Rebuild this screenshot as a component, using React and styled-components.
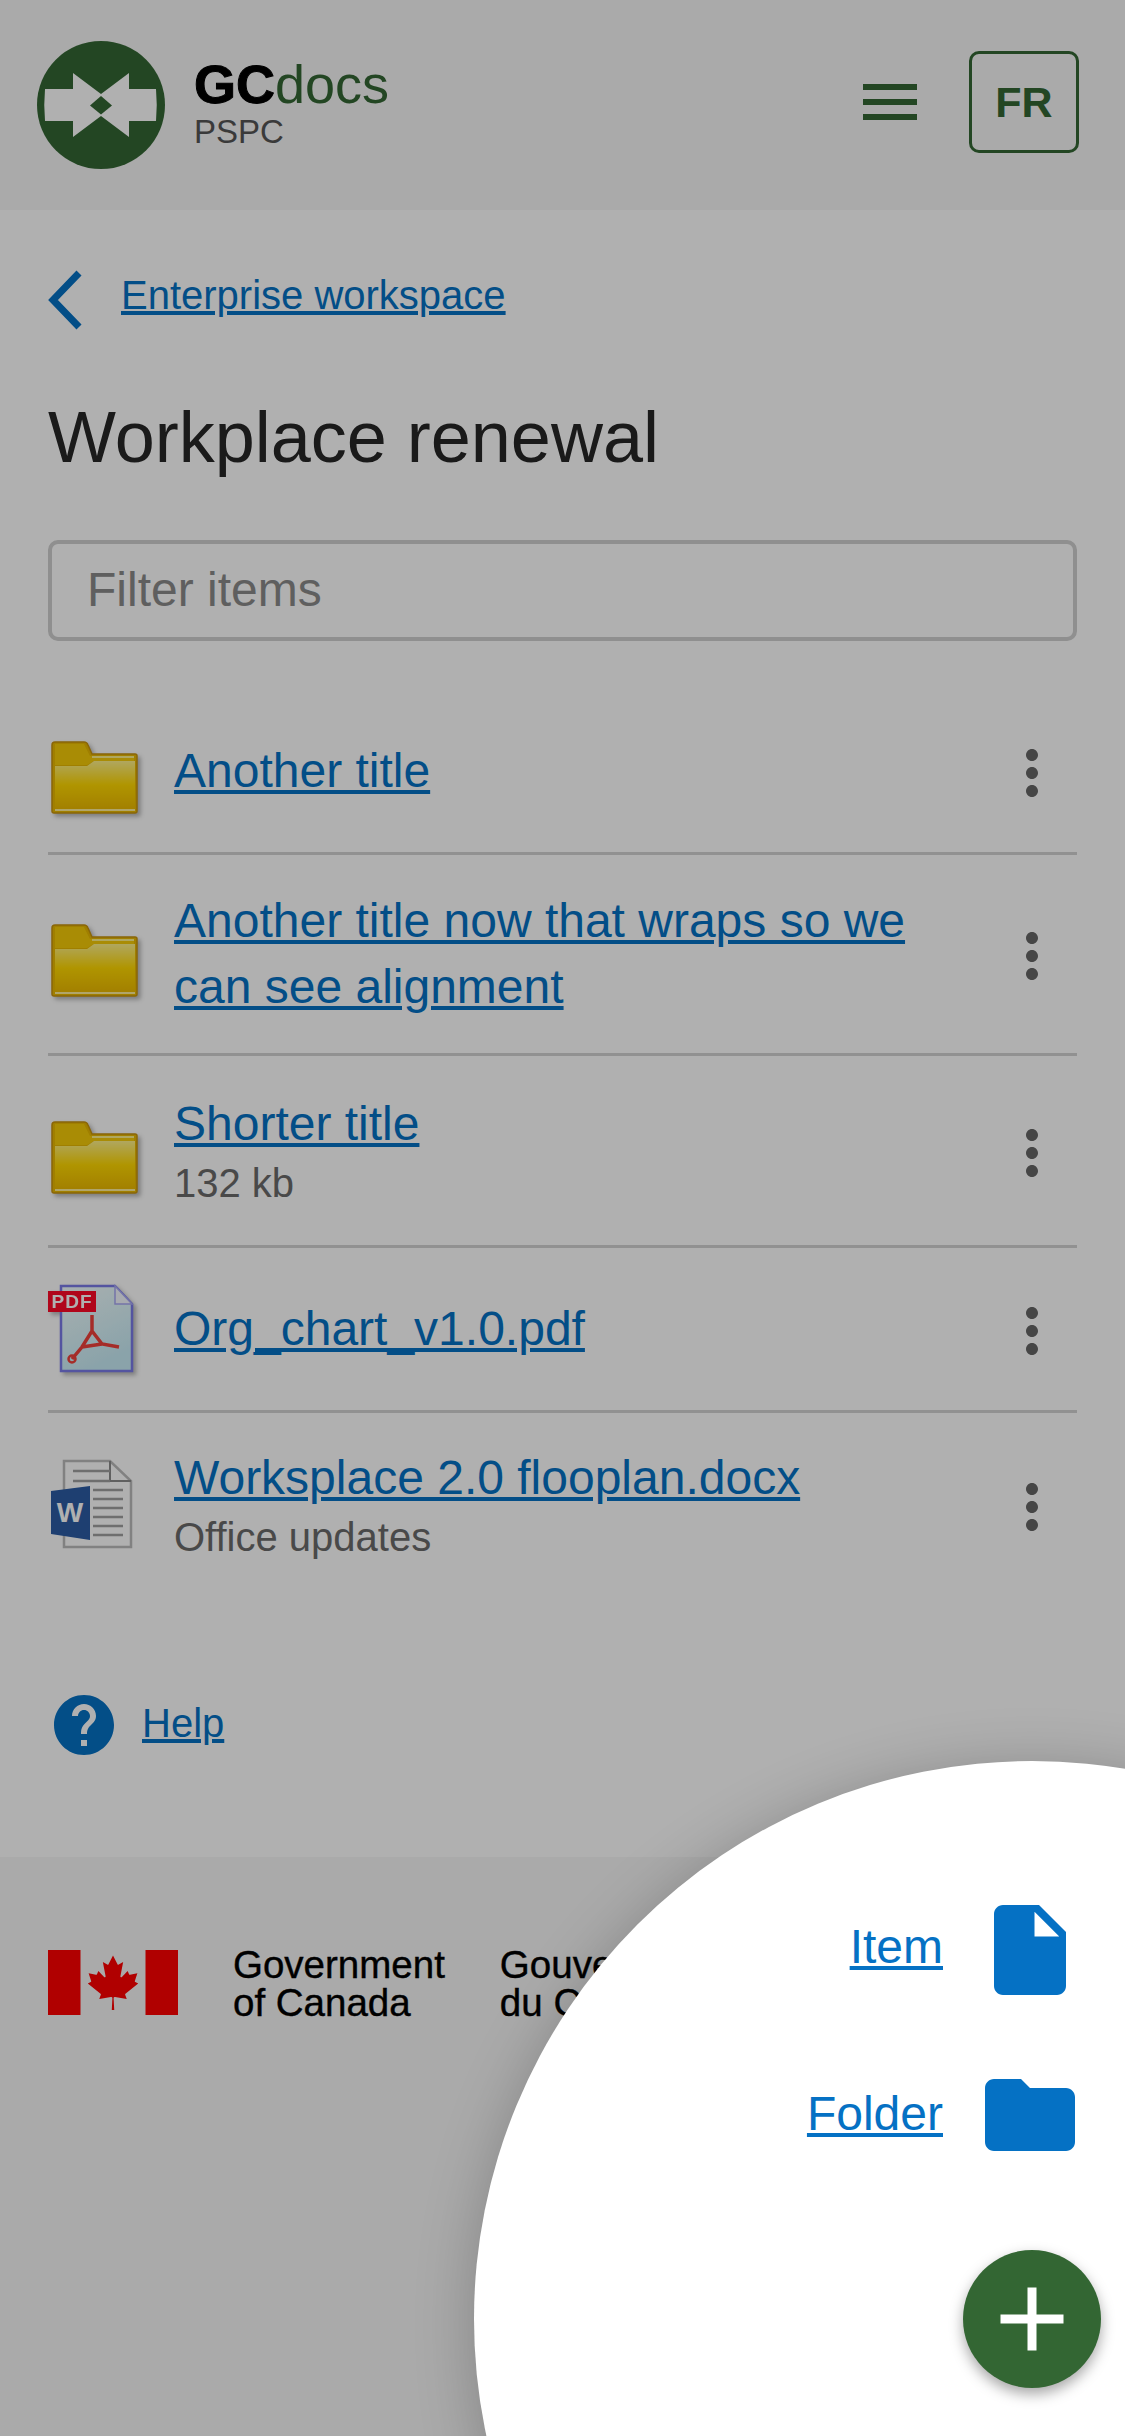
import React from "react";
import styled, { createGlobalStyle } from "styled-components";

const GlobalStyle = createGlobalStyle`
  html, body {
    margin: 0;
    padding: 0;
    background: #fff;
  }
  * {
    box-sizing: border-box;
  }
`;

const Page = styled.div`
  position: relative;
  width: 1125px;
  height: 2436px;
  overflow: hidden;
  font-family: "Liberation Sans", Arial, sans-serif;
  color: #262626;
  background: #fff;
`;

const Header = styled.header`
  display: flex;
  align-items: center;
  height: 210px;
  padding: 0 46px 6px 37px;
  background: #f6f6f6;
`;

const Logo = styled.svg`
  width: 128px;
  height: 128px;
  margin-top: 5px;
  flex: none;
`;

const Wordmark = styled.div`
  display: flex;
  flex-direction: column;
  margin: 3px auto 0 29px;
`;

const Brand = styled.div`
  font-size: 54px;
  line-height: 54px;
  color: #336633;
  b {
    color: #000;
    -webkit-text-stroke: 1px #000;
  }
`;

const Dept = styled.div`
  margin-top: 3px;
  font-size: 33px;
  line-height: 36px;
  color: #555;
`;

const MenuIcon = styled.svg`
  width: 72px;
  height: 72px;
  fill: #336633;
`;

const LangButton = styled.div`
  display: flex;
  align-items: center;
  justify-content: center;
  width: 110px;
  height: 102px;
  margin-left: 43px;
  border: 3px solid #336633;
  border-radius: 10px;
  font-size: 43px;
  font-weight: 700;
  color: #336633;
`;

const Main = styled.main`
  padding: 52px 48px 96px;
`;

const BackRow = styled.div`
  display: flex;
  align-items: center;
  gap: 38px;
  height: 66px;
`;

const Chevron = styled.svg`
  width: 35px;
  height: 60px;
  margin-top: 10px;
  fill: none;
  stroke: #0571c4;
  stroke-width: 7;
`;

const TextLink = styled.a`
  font-size: ${(p) => p.$size || 48}px;
  line-height: ${(p) => p.$lh || 66}px;
  color: #0571c4;
  text-decoration: underline;
`;

const Title = styled.h1`
  margin: 66px 0 60px;
  font-size: 72px;
  line-height: 86px;
  font-weight: 400;
  color: #262626;
`;

const FilterInput = styled.input`
  display: block;
  width: 100%;
  height: 101px;
  padding: 0 35px 2px;
  border: 4px solid #cfcfcf;
  border-radius: 10px;
  background: #fff;
  font-family: inherit;
  font-size: 48px;
  &::placeholder {
    color: #8a8a8a;
    opacity: 1;
  }
`;

const List = styled.ul`
  list-style: none;
  margin: 49px 0 0;
  padding: 0;
`;

const Row = styled.li`
  display: flex;
  align-items: center;
  padding: 33px 9px 33px 0;
  border-bottom: 3px solid #d2d2d2;
  &:last-child {
    padding-top: 30px;
    border-bottom: 0;
  }
`;

const FileIcon = styled.svg`
  width: 96px;
  height: 96px;
  flex: none;
  overflow: visible;
  filter: ${(p) => (p.$flat ? "none" : "drop-shadow(3px 3px 2px rgba(0, 0, 0, 0.28))")};
`;

const RowText = styled.div`
  flex: 1;
  margin: 0 36px 0 30px;
  padding-top: ${(p) => (p.$hasSub ? 2 : 0)}px;
`;

const SubText = styled.div`
  padding-bottom: 3px;
  font-size: 40px;
  line-height: 52px;
  color: #6b6b6b;
`;

const MoreIcon = styled.svg`
  width: 72px;
  height: 72px;
  margin-top: 4px;
  flex: none;
  fill: #666;
`;

const HelpRow = styled.div`
  display: flex;
  align-items: center;
  gap: 22px;
  margin-top: 90px;
`;

const HelpIcon = styled.svg`
  width: 72px;
  height: 72px;
  fill: #0571c4;
`;

const HelpLink = styled(TextLink)`
  margin-bottom: 4px;
`;

const Footer = styled.footer`
  display: flex;
  align-items: flex-start;
  height: 579px;
  padding: 93px 48px 0;
  background: #f6f6f6;
`;

const Flag = styled.svg`
  width: 130px;
  height: 65px;
  flex: none;
  fill: #ff0000;
`;

const Wordmarks = styled.div`
  display: flex;
  gap: 55px;
  margin: -4px 0 0 55px;
`;

const GovName = styled.div`
  font-size: 38.5px;
  line-height: 38px;
  color: #000;
  -webkit-text-stroke: 0.4px #000;
`;

const Scrim = styled.div`
  position: absolute;
  inset: 0;
  background: rgba(0, 0, 0, 0.31);
`;

const Spotlight = styled.div`
  position: absolute;
  left: 474px;
  top: 1761px;
  width: 1116px;
  height: 1116px;
  border-radius: 50%;
  background: #fff;
  box-shadow: 0 6px 60px rgba(0, 0, 0, 0.22);
`;

const Dial = styled.div`
  position: absolute;
  right: 24px;
  bottom: 48px;
  display: flex;
  flex-direction: column;
  align-items: flex-end;
`;

const DialAction = styled.div`
  display: flex;
  align-items: center;
  gap: 33px;
  margin-bottom: ${(p) => p.$gap}px;
  padding-right: 17px;
`;

const DialLabel = styled(TextLink)`
  margin-bottom: ${(p) => p.$lift}px;
`;

const DialIcon = styled.svg`
  width: 108px;
  height: 108px;
  fill: #0571c4;
`;

const Fab = styled.button`
  display: flex;
  align-items: center;
  justify-content: center;
  width: 138px;
  height: 138px;
  padding: 0;
  border: 0;
  border-radius: 50%;
  background: #336633;
  box-shadow: 0 6px 14px rgba(0, 0, 0, 0.35);
`;

const PlusIcon = styled.svg`
  width: 108px;
  height: 108px;
  fill: #fff;
`;

const FolderIcon = () => (
  <FileIcon viewBox="0 0 96 96">
    <defs>
      <linearGradient id="folderFront" x1="0" y1="0" x2="0" y2="1">
        <stop offset="0" stopColor="#fff28a" />
        <stop offset="0.5" stopColor="#ffd800" />
        <stop offset="1" stopColor="#ecba00" />
      </linearGradient>
    </defs>
    <path
      d="M7 19h29q3 0 4 3l4 9h43a2 2 0 0 1 2 2v55a2 2 0 0 1-2 2H6a2 2 0 0 1-2-2V22a3 3 0 0 1 3-3z"
      fill="#e8b800"
      stroke="#c8940c"
      strokeWidth="1.5"
    />
    <path d="M7 21h29l6 12h44v5H46l-7 4H7z" fill="#f5cb08" />
    <path d="M44 34h42" stroke="#fff28a" strokeWidth="2" />
    <path d="M7 43h32l7-5h41v48H7z" fill="url(#folderFront)" />
    <path d="M7 87h80" stroke="#fff09a" strokeWidth="2" />
  </FileIcon>
);

const PdfIcon = () => (
  <FileIcon viewBox="0 0 96 96">
    <defs>
      <linearGradient id="pdfPage" x1="0" y1="0" x2="0.4" y2="1">
        <stop offset="0" stopColor="#f4ffff" />
        <stop offset="1" stopColor="#c8ecf6" />
      </linearGradient>
    </defs>
    <path d="M13 5h54l17 18v67H13z" fill="url(#pdfPage)" stroke="#7a7ae8" strokeWidth="2.5" />
    <path d="M67 5v18h17z" fill="#f4f8ff" stroke="#a8a8f4" strokeWidth="1.5" />
    <path
      d="M44 34v16L34 66 24 78M44 50l10 13 17 3M34 66l20-3"
      fill="none"
      stroke="#f0403a"
      strokeWidth="3.5"
    />
    <circle cx="24" cy="78" r="3.5" fill="none" stroke="#f0403a" strokeWidth="2.5" />
    <rect x="0" y="10" width="48" height="21" fill="#ff0a28" />
    <text x="24" y="27" textAnchor="middle" fontSize="19" fontWeight="700" fill="#fff" letterSpacing="1">
      PDF
    </text>
  </FileIcon>
);

const WordIcon = () => (
  <FileIcon viewBox="0 0 96 96" $flat>
    <path d="M16 4h46l21 20v66H16z" fill="#fff" stroke="#bcbcbc" strokeWidth="2.5" />
    <path d="M62 4v20h21" fill="none" stroke="#8c8c8c" strokeWidth="2" />
    <path
      d="M25 14h37M25 24h37M45 33h30M45 42h30M45 51h30M45 60h30M45 69h30M45 78h30"
      stroke="#a0a0a0"
      strokeWidth="2.5"
    />
    <path d="M3 34l39-5v54L3 77z" fill="#2c5ca4" />
    <text x="22" y="65" textAnchor="middle" fontSize="28" fontWeight="700" fill="#fff">
      W
    </text>
  </FileIcon>
);

const items = [
  { title: "Another title", Icon: FolderIcon },
  { title: "Another title now that wraps so we can see alignment", Icon: FolderIcon },
  { title: "Shorter title", sub: "132 kb", Icon: FolderIcon },
  { title: "Org_chart_v1.0.pdf", Icon: PdfIcon },
  { title: "Worksplace 2.0 flooplan.docx", sub: "Office updates", Icon: WordIcon },
];

const App = () => (
  <Page>
    <GlobalStyle />
    <Header>
      <Logo viewBox="0 0 128 128">
        <circle cx="64" cy="64" r="64" fill="#336633" />
        <path
          d="M8 48h28V32l28 21 28-21v16h27q1.500 16 0 32H92v16L64 75 36 96V80H8q-1.500-16 0-32z"
          fill="#fff"
        />
        <path d="M64 55l11 9.500-11 9-11-9z" fill="#336633" />
      </Logo>
      <Wordmark>
        <Brand>
          <b>GC</b>docs
        </Brand>
        <Dept>PSPC</Dept>
      </Wordmark>
      <MenuIcon viewBox="0 0 24 24">
        <path d="M3 18h18v-2H3v2zm0-5h18v-2H3v2zm0-7v2h18V6H3z" />
      </MenuIcon>
      <LangButton>FR</LangButton>
    </Header>

    <Main>
      <BackRow>
        <Chevron viewBox="0 0 35 60">
          <path d="M31 3L5 30l26 27" />
        </Chevron>
        <TextLink href="#" $size={40} $lh={66}>
          Enterprise workspace
        </TextLink>
      </BackRow>
      <Title>Workplace renewal</Title>
      <FilterInput placeholder="Filter items" />
      <List>
        {items.map(({ title, sub, Icon }) => (
          <Row key={title}>
            <Icon />
            <RowText $hasSub={Boolean(sub)}>
              <TextLink href="#">{title}</TextLink>
              {sub && <SubText>{sub}</SubText>}
            </RowText>
            <MoreIcon viewBox="0 0 24 24">
              <path d="M12 8c1.100 0 2-.9 2-2s-.9-2-2-2-2 .9-2 2 .9 2 2 2zm0 2c-1.100 0-2 .9-2 2s.9 2 2 2 2-.9 2-2-.9-2-2-2zm0 6c-1.100 0-2 .9-2 2s.9 2 2 2 2-.9 2-2-.9-2-2-2z" />
            </MoreIcon>
          </Row>
        ))}
      </List>
      <HelpRow>
        <HelpIcon viewBox="0 0 24 24">
          <path d="M12 2C6.480 2 2 6.480 2 12s4.480 10 10 10 10-4.480 10-10S17.520 2 12 2zm1 17h-2v-2h2v2zm2.070-7.750l-.9.920C13.450 12.900 13 13.500 13 15h-2v-.5c0-1.100.450-2.100 1.170-2.830l1.240-1.260c.370-.360.590-.860.590-1.410 0-1.100-.9-2-2-2s-2 .9-2 2H8c0-2.210 1.790-4 4-4s4 1.790 4 4c0 .880-.360 1.680-.930 2.250z" />
        </HelpIcon>
        <HelpLink href="#" $size={40} $lh={50}>
          Help
        </HelpLink>
      </HelpRow>
    </Main>

    <Footer>
      <Flag viewBox="0 0 9600 4800">
        <path d="M0 0h2400v4800H0zM7200 0h2400v4800H7200z" />
        <path d="M4890 4430l-45-863a95 95 0 0 1 111-98l859 151-116-320a65 65 0 0 1 20-73l941-762-212-99a65 65 0 0 1-34-79l186-572-542 115a65 65 0 0 1-73-38l-105-247-423 454a65 65 0 0 1-111-57l204-1052-327 189a65 65 0 0 1-91-27l-332-652-332 652a65 65 0 0 1-91 27l-327-189 204 1052a65 65 0 0 1-111 57l-423-454-105 247a65 65 0 0 1-73 38l-542-115 186 572a65 65 0 0 1-34 79l-212 99 941 762a65 65 0 0 1 20 73l-116 320 859-151a95 95 0 0 1 111 98l-45 863z" />
      </Flag>
      <Wordmarks>
        <GovName>
          Government
          <br />
          of Canada
        </GovName>
        <GovName>
          Gouvernement
          <br />
          du Canada
        </GovName>
      </Wordmarks>
    </Footer>

    <Scrim />
    <Spotlight />
    <Dial>
      <DialAction $gap={57}>
        <DialLabel href="#" $lift={6}>
          Item
        </DialLabel>
        <DialIcon viewBox="0 0 24 24">
          <path d="M6 2c-1.100 0-2 .9-2 2v16c0 1.100.9 2 2 2h12c1.100 0 2-.9 2-2V8l-6-6H6zm7 7V3.500L18.500 9H13z" />
        </DialIcon>
      </DialAction>
      <DialAction $gap={81}>
        <DialLabel href="#" $lift={3}>
          Folder
        </DialLabel>
        <DialIcon viewBox="0 0 24 24">
          <path d="M10 4H4c-1.100 0-2 .9-2 2v12c0 1.100.9 2 2 2h16c1.100 0 2-.9 2-2V8c0-1.100-.9-2-2-2h-8l-2-2z" />
        </DialIcon>
      </DialAction>
      <Fab>
        <PlusIcon viewBox="0 0 24 24">
          <path d="M19 13h-6v6h-2v-6H5v-2h6V5h2v6h6v2z" />
        </PlusIcon>
      </Fab>
    </Dial>
  </Page>
);

export default App;
